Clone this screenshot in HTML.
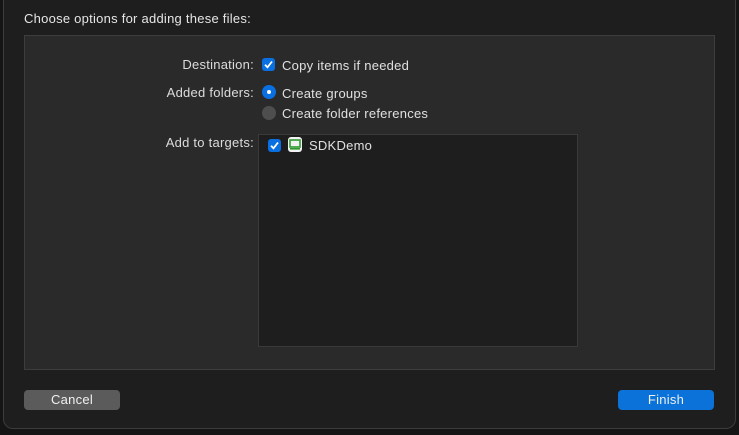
<!DOCTYPE html>
<html><head><style>
body{margin:0;width:739px;height:435px;background:#151515;font-family:"Liberation Sans",sans-serif;font-size:13px;letter-spacing:0.25px;color:#e0e0e0;position:relative;overflow:hidden}
.dlg{position:absolute;left:3px;top:0;width:731px;height:428px;background:#1e1e1e;border:1px solid #3c3c3c;border-top:none;border-radius:0 0 10px 10px}
.t{position:absolute;left:24px;top:11px;font-size:13px;color:#e6e6e6}
.box{position:absolute;left:24px;top:35px;width:689px;height:333px;background:#2a2a2a;border:1px solid #3d3d3d}
.lbl{position:absolute;right:485px;text-align:right;color:#dcdcdc}
.opt{position:absolute;left:282px;color:#e0e0e0}
.cb{position:absolute;width:13px;height:13px;background:#0a6fe0;border-radius:3px}
.cb svg{position:absolute;left:1px;top:1px}
.rd{position:absolute;width:14px;height:14px;border-radius:50%}
.list{position:absolute;left:258px;top:134px;width:318px;height:211px;background:#1e1e1e;border:1px solid #3a3a3a}
.btn{position:absolute;top:390px;width:96px;height:20px;border-radius:4px;text-align:center;line-height:20px;color:#f0f0f0}
</style></head><body>
<div class="dlg"></div>
<div class="t">Choose options for adding these files:</div>
<div class="box"></div>
<div class="lbl" style="top:57px">Destination:</div>
<div class="cb" style="left:262px;top:58px"><svg width="11" height="11" viewBox="0 0 11 11"><path d="M2 5.8 L4.5 8.3 L9 2.5" stroke="#fff" stroke-width="1.8" fill="none"/></svg></div>
<div class="opt" style="top:58px">Copy items if needed</div>
<div class="lbl" style="top:85px">Added folders:</div>
<div class="rd" style="left:262px;top:85px;background:#0a6fe0"><div style="position:absolute;left:5px;top:5px;width:4px;height:4px;border-radius:50%;background:#fff"></div></div>
<div class="opt" style="top:86px">Create groups</div>
<div class="rd" style="left:262px;top:106px;background:#4e4e4e"></div>
<div class="opt" style="top:106px">Create folder references</div>
<div class="lbl" style="top:135px">Add to targets:</div>
<div class="list"></div>
<div class="cb" style="left:268px;top:139px"><svg width="11" height="11" viewBox="0 0 11 11"><path d="M2 5.8 L4.5 8.3 L9 2.5" stroke="#fff" stroke-width="1.8" fill="none"/></svg></div>
<svg style="position:absolute;left:288px;top:137px" width="14" height="15" viewBox="0 0 14 15"><rect x="0" y="0" width="14" height="15" rx="3" fill="#f2f2f2"/><rect x="2" y="3" width="10" height="7" fill="none" stroke="#2e9a2e" stroke-width="1.6"/><rect x="2" y="11" width="10" height="1.6" fill="#2e9a2e"/></svg>
<div class="opt" style="left:309px;top:138px">SDKDemo</div>
<div class="btn" style="left:24px;background:#5b5b5b">Cancel</div>
<div class="btn" style="left:618px;background:#0a72d8">Finish</div>
</body></html>
